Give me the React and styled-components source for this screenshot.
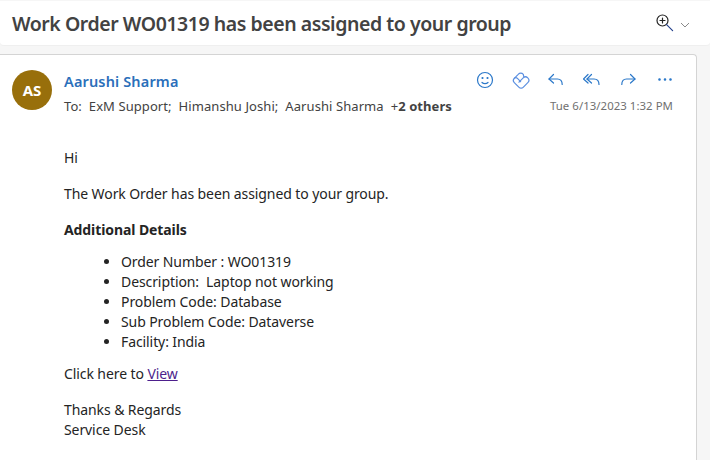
import React from "react";
import styled, { createGlobalStyle } from "styled-components";

const GlobalStyle = createGlobalStyle`
  html, body {
    margin: 0;
    padding: 0;
    width: 710px;
    height: 460px;
    overflow: hidden;
    background: #f6f6f6;
    font-family: "Noto Sans", "Open Sans", sans-serif;
  }
`;

const Page = styled.div`
  display: flex;
  flex-direction: column;
  height: 460px;
  overflow: hidden;
  padding-top: 1px;
  box-sizing: border-box;
`;

const SubjectBar = styled.header`
  display: flex;
  align-items: center;
  justify-content: space-between;
  height: 44px;
  flex-shrink: 0;
  padding: 0 20px 0 12px;
  background: #fff;
  border-bottom: 1px solid #efefef;
  border-radius: 0 0 4px 4px;
`;

const Subject = styled.h1`
  margin: 0;
  font-size: 19.5px;
  font-weight: 600;
  letter-spacing: -0.45px;
  color: #424242;
  white-space: nowrap;
`;

const ZoomControl = styled.div`
  display: flex;
  align-items: center;
  gap: 5px;
`;

const Chevron = styled.svg`
  display: block;
  margin-top: 3px;
  fill: none;
  stroke: #8a8a8a;
`;

const Card = styled.article`
  flex: 1;
  margin: 8px 13px 0 0;
  background: #fff;
  border: 1px solid #d4d4d4;
  border-left: 0;
  border-bottom: 0;
  border-radius: 0 4px 0 0;
  padding: 15px 23px 0 12px;
`;

const MessageHead = styled.div`
  display: flex;
  gap: 12px;
`;

const Avatar = styled.div`
  display: flex;
  align-items: center;
  justify-content: center;
  width: 40px;
  height: 40px;
  flex-shrink: 0;
  border-radius: 50%;
  background: #986f0b;
  color: #fff;
  font-size: 15px;
  font-weight: 700;
`;

const HeadMain = styled.div`
  flex: 1;
  min-width: 0;
`;

const HeadRow = styled.div`
  display: flex;
  align-items: center;
  justify-content: space-between;
  height: ${(p) => p.$height}px;
`;

const Sender = styled.span`
  font-size: 14.5px;
  font-weight: 600;
  letter-spacing: 0.15px;
  color: #2b6fba;
`;

const Recipients = styled.span`
  font-size: 13px;
  letter-spacing: 0.08px;
  color: #424242;
  white-space: pre;
  margin-top: 1px;
`;

const More = styled.b`
  font-weight: 700;
`;

const Timestamp = styled.span`
  font-size: 11.4px;
  letter-spacing: 0.05px;
  color: #707070;
`;

const Actions = styled.div`
  display: flex;
  align-items: center;
  gap: 16px;
  margin: -3px -2px 0 0;
`;

const Body = styled.div`
  padding: 30px 0 0 52px;
  font-size: 14px;
  line-height: 20px;
  letter-spacing: -0.09px;
  color: #242424;
`;

const Para = styled.p`
  margin: 0 0 ${(p) => p.$gap ?? 16}px;
`;

const DetailList = styled.ul`
  margin: 0 0 12px;
  padding: 0 0 0 57px;
  list-style: disc;
`;

const DetailItem = styled.li`
  white-space: pre;
`;

const ViewLink = styled.a`
  color: #4d1f8c;
  text-decoration: underline;
`;

const Icon = styled.svg`
  display: block;
  width: 20px;
  height: 20px;
  fill: none;
  stroke: ${(p) => p.$color ?? "#2b78c9"};
  stroke-width: 1.2;
  stroke-linecap: round;
  stroke-linejoin: round;
`;

const details = [
  "Order Number : WO01319",
  "Description:  Laptop not working",
  "Problem Code: Database",
  "Sub Problem Code: Dataverse",
  "Facility: India",
];

export default function App() {
  return (
    <>
      <GlobalStyle />
      <Page>
        <SubjectBar>
          <Subject>Work Order WO01319 has been assigned to your group</Subject>
          <ZoomControl>
            <Icon viewBox="0 0 20 20" $color="#242424">
              <circle cx="7.5" cy="7.5" r="5.5" />
              <path d="M5 7.5h5M7.5 5v5" />
              <path d="M11.6 11.6l6 6" stroke="#24418c" />
            </Icon>
            <Chevron width="10" height="6" viewBox="0 0 10 6">
              <path d="M1 1l4 4 4-4" />
            </Chevron>
          </ZoomControl>
        </SubjectBar>
        <Card>
          <MessageHead>
            <Avatar>AS</Avatar>
            <HeadMain>
              <HeadRow $height={22}>
                <Sender>Aarushi Sharma</Sender>
                <Actions>
                  <Icon viewBox="0 0 20 20">
                    <circle cx="10" cy="10" r="7.5" />
                    <path d="M7 12.5c1.6 1.6 4.4 1.6 6 0" />
                    <circle cx="7.5" cy="8" r=".5" fill="#2b78c9" />
                    <circle cx="12.5" cy="8" r=".5" fill="#2b78c9" />
                  </Icon>
                  <Icon viewBox="0 0 20 20" $color="#5b8fe0">
                    <path d="M12.800 6.800L12.300 4.300c-1.500-1.700-3.600-1.700-5.100 0L3.300 8.300c-1.300 1.400-1.300 3 0 4.300l4.500 4.500c1.400 1.400 3.200 1.400 4.600 0l4.400-4.400c1.400-1.400 1.400-3.400 0-4.800-1.400-1.400-3.200-1.400-4.600 0l-4.200 4.300" />
                    <path d="M3.300 8.300c1.200-.9 2.300-.7 3.400.4l2.900 3" />
                  </Icon>
                  <Icon viewBox="0 0 20 20">
                    <path d="M6.500 4.500L2 9l4.500 4" />
                    <path d="M2 9h8.500c3 0 4.700 2 4.700 5.500" />
                  </Icon>
                  <Icon viewBox="0 0 20 20">
                    <path d="M5 4.500L.5 9 5 13" />
                    <path d="M8.500 4.500L4 9l4.500 4" />
                    <path d="M4 9h7c3 0 5 2 5 5.500" />
                  </Icon>
                  <Icon viewBox="0 0 20 20">
                    <path d="M11.500 4.500L16 9l-4.500 4" />
                    <path d="M16 9H7.500c-3 0-4.700 2-4.700 5.500" />
                  </Icon>
                  <Icon viewBox="0 0 20 20">
                    <circle cx="4.500" cy="9.500" r=".7" fill="#2b78c9" />
                    <circle cx="10" cy="9.500" r=".7" fill="#2b78c9" />
                    <circle cx="15.500" cy="9.500" r=".7" fill="#2b78c9" />
                  </Icon>
                </Actions>
              </HeadRow>
              <HeadRow $height={26}>
                <Recipients>
                  {"To:  ExM Support;  Himanshu Joshi;  Aarushi Sharma  +"}
                  <More>2 others</More>
                </Recipients>
                <Timestamp>Tue 6/13/2023 1:32 PM</Timestamp>
              </HeadRow>
            </HeadMain>
          </MessageHead>
          <Body>
            <Para>Hi</Para>
            <Para>The Work Order has been assigned to your group.</Para>
            <Para $gap={12}>
              <b>Additional Details</b>
            </Para>
            <DetailList>
              {details.map((item) => (
                <DetailItem key={item}>{item}</DetailItem>
              ))}
            </DetailList>
            <Para>
              Click here to <ViewLink href="#">View</ViewLink>
            </Para>
            <Para $gap={0}>Thanks &amp; Regards</Para>
            <Para $gap={0}>Service Desk</Para>
          </Body>
        </Card>
      </Page>
    </>
  );
}
